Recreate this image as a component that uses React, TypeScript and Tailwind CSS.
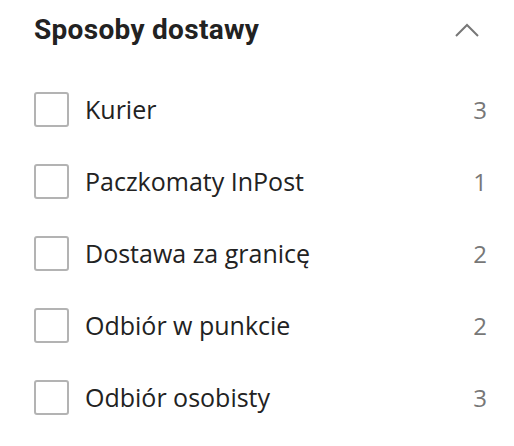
const options = [
  { label: 'Kurier', count: 3 },
  { label: 'Paczkomaty InPost', count: 1 },
  { label: 'Dostawa za granicę', count: 2 },
  { label: 'Odbiór w punkcie', count: 2 },
  { label: 'Odbiór osobisty', count: 3 }
];

export default function App() {
  return (
    <div className="w-[514px] h-[446px] bg-white pl-[34px] pr-[27px] pt-[10px]">
      <div className="flex items-center justify-between h-[40px]">
        <h2 className="font-['Roboto',sans-serif] font-bold text-[28px] leading-[40px] tracking-[0.3px] text-[#222]">
          Sposoby dostawy
        </h2>
        <svg width="26" height="16" viewBox="0 0 26 16" className="mr-[7px]">
          <path d="M2 14 L13 3 L24 14" fill="none" stroke="#777" strokeWidth="2" />
        </svg>
      </div>
      <ul className="mt-[42px] flex flex-col gap-[37px]">
        {options.map((opt) => (
          <li key={opt.label} className="flex items-center h-[35px]">
            <span className="w-[35px] h-[35px] border-2 border-[#b3b3b3] rounded-[3px] shrink-0" />
            <span className="ml-[16px] flex-1 font-['Open_Sans',sans-serif] text-[25px] text-[#222]">
              {opt.label}
            </span>
            <span className="font-['Open_Sans',sans-serif] text-[24px] text-[#777]">
              {opt.count}
            </span>
          </li>
        ))}
      </ul>
    </div>
  );
}
